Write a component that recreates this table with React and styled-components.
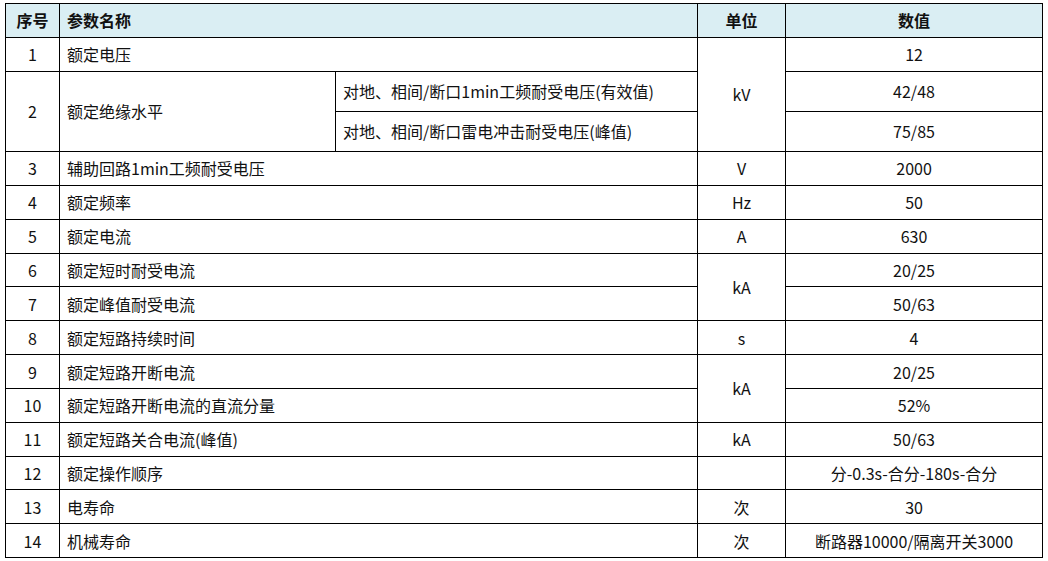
import React from "react";
import styled, { createGlobalStyle } from "styled-components";

const GlobalStyle = createGlobalStyle`
  body {
    margin: 0;
    background: #ffffff;
    font-family: "Noto Sans CJK SC", "Noto Sans", sans-serif;
  }
`;

const Page = styled.div`
  padding: 3px 0 0 5px;
`;

const Table = styled.table`
  border-collapse: collapse;
  table-layout: fixed;
  width: 1037px;
  color: #111;
  font-size: 16px;
  line-height: 20px;

  td, th {
    border: 1px solid #000;
    padding: 0;
    vertical-align: middle;
    white-space: nowrap;
  }
`;

const HeadRow = styled.tr`
  background: #daeef3;
  height: 33.8px;

  th {
    font-weight: 700;
    text-align: center;
  }
`;

const Row = styled.tr`
  height: ${(p) => p.$h || 33.85}px;
`;

const Center = styled.td`
  text-align: center;
`;

const Name = styled.td`
  text-align: left;
  padding-left: 7px !important;
`;

const HeadName = styled.th`
  text-align: left !important;
  padding-left: 7px !important;
`;

const simple = [
  ["3", "辅助回路1min工频耐受电压", "V", "2000"],
  ["4", "额定频率", "Hz", "50"],
  ["5", "额定电流", "A", "630"],
];

export default function App() {
  return (
    <Page>
      <GlobalStyle />
      <Table>
        <colgroup>
          <col style={{ width: 54 }} />
          <col style={{ width: 276 }} />
          <col style={{ width: 362 }} />
          <col style={{ width: 88 }} />
          <col style={{ width: 257 }} />
        </colgroup>
        <thead>
          <HeadRow>
            <th>序号</th>
            <HeadName colSpan={2}>参数名称</HeadName>
            <th>单位</th>
            <th>数值</th>
          </HeadRow>
        </thead>
        <tbody>
          <Row>
            <Center>1</Center>
            <Name colSpan={2}>额定电压</Name>
            <Center rowSpan={3}>kV</Center>
            <Center>12</Center>
          </Row>
          <Row $h={40.2}>
            <Center rowSpan={2}>2</Center>
            <Name rowSpan={2}>额定绝缘水平</Name>
            <Name>对地、相间/断口1min工频耐受电压(有效值)</Name>
            <Center>42/48</Center>
          </Row>
          <Row $h={40.2}>
            <Name>对地、相间/断口雷电冲击耐受电压(峰值)</Name>
            <Center>75/85</Center>
          </Row>
          {simple.map(([n, name, unit, val]) => (
            <Row key={n}>
              <Center>{n}</Center>
              <Name colSpan={2}>{name}</Name>
              <Center>{unit}</Center>
              <Center>{val}</Center>
            </Row>
          ))}
          <Row>
            <Center>6</Center>
            <Name colSpan={2}>额定短时耐受电流</Name>
            <Center rowSpan={2}>kA</Center>
            <Center>20/25</Center>
          </Row>
          <Row>
            <Center>7</Center>
            <Name colSpan={2}>额定峰值耐受电流</Name>
            <Center>50/63</Center>
          </Row>
          <Row>
            <Center>8</Center>
            <Name colSpan={2}>额定短路持续时间</Name>
            <Center>s</Center>
            <Center>4</Center>
          </Row>
          <Row>
            <Center>9</Center>
            <Name colSpan={2}>额定短路开断电流</Name>
            <Center rowSpan={2}>kA</Center>
            <Center>20/25</Center>
          </Row>
          <Row>
            <Center>10</Center>
            <Name colSpan={2}>额定短路开断电流的直流分量</Name>
            <Center>52%</Center>
          </Row>
          <Row>
            <Center>11</Center>
            <Name colSpan={2}>额定短路关合电流(峰值)</Name>
            <Center>kA</Center>
            <Center>50/63</Center>
          </Row>
          <Row>
            <Center>12</Center>
            <Name colSpan={2}>额定操作顺序</Name>
            <Center></Center>
            <Center>分-0.3s-合分-180s-合分</Center>
          </Row>
          <Row>
            <Center>13</Center>
            <Name colSpan={2}>电寿命</Name>
            <Center>次</Center>
            <Center>30</Center>
          </Row>
          <Row>
            <Center>14</Center>
            <Name colSpan={2}>机械寿命</Name>
            <Center>次</Center>
            <Center>断路器10000/隔离开关3000</Center>
          </Row>
        </tbody>
      </Table>
    </Page>
  );
}
